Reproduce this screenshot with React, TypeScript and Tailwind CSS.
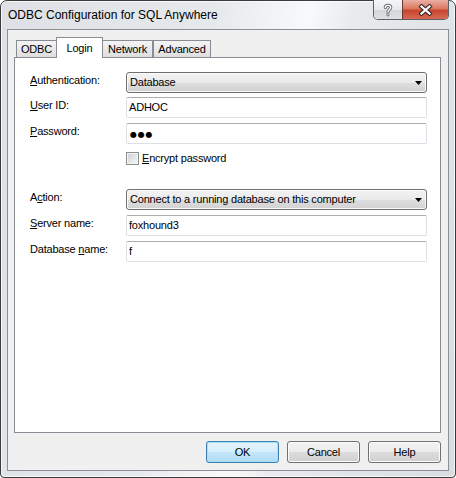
import type { ReactNode } from 'react';

function Label({ children }: { children: ReactNode }) {
  return <div className="pb-[4px] leading-[13px]">{children}</div>;
}

function Combo({ value }: { value: string }) {
  return (
    <div className="flex h-[21px] items-center rounded-[3px] border border-[#707070] bg-[linear-gradient(#f3f3f3_0%,#eaeaea_50%,#dedede_51%,#d2d2d2_100%)] pl-[3px] pr-[4px] shadow-[inset_0_0_0_1px_#fafafa]">
      <span className="flex-1 leading-[13px]">{value}</span>
      <svg width="7" height="4" viewBox="0 0 7 4">
        <path d="M0 0H7L3.5 4Z" fill="#000" />
      </svg>
    </div>
  );
}

function Edit({ children }: { children?: ReactNode }) {
  return (
    <div className="flex h-[21px] items-center rounded-[2px] border border-[#dde1e7] border-t-[#abadb3] bg-white pl-[2px]">
      <span className="leading-[13px]">{children}</span>
    </div>
  );
}

function Button({ label, isDefault }: { label: string; isDefault?: boolean }) {
  return (
    <div
      className={
        isDefault
          ? 'flex h-[22px] w-[73px] items-center justify-center rounded-[3px] border border-[#3c7fb1] bg-[linear-gradient(#e5f4fc_0%,#d5eefc_50%,#c2e6fa_51%,#b2dcf4_100%)] shadow-[inset_0_0_0_1px_#a8e1f7]'
          : 'flex h-[22px] w-[73px] items-center justify-center rounded-[3px] border border-[#707070] bg-[linear-gradient(#f2f2f2_0%,#ebebeb_50%,#dddddd_51%,#cfcfcf_100%)] shadow-[inset_0_0_0_1px_#fbfbfb]'
      }
    >
      {label}
    </div>
  );
}

export default function App() {
  return (
    <div className="h-[478px] w-[456px] bg-white">
      <div className="flex h-[478px] w-[456px] flex-col rounded-t-[7px] rounded-b-[4px] border border-[#3b3b3b] bg-[linear-gradient(100deg,#dde1e5_0%,#e6e9ec_40%,#f8f9fa_58%,#e8eaed_66%,#d9dde1_100%)] font-['Liberation_Sans',Arial,sans-serif] text-[11px] tracking-[-0.2px] text-black shadow-[inset_0_0_0_1px_rgba(255,255,255,0.7)]">
        {/* title bar */}
        <div className="flex h-[28px] items-start pl-[7px] pr-[6px]">
          <div className="pt-[7px] text-[12px] leading-[14px] tracking-normal">ODBC Configuration for SQL Anywhere</div>
          <div className="-mt-px ml-auto flex h-[20px] overflow-hidden rounded-b-[5px] border border-t-0 border-[#5c6068]">
            <div className="flex w-[28px] items-center justify-center bg-[linear-gradient(#f5f6f7_0%,#e6e8ea_50%,#d3d6d9_51%,#dfe1e4_100%)]">
              <svg width="10" height="14" viewBox="0 0 10 14">
                <path d="M2.3 4.4C2.3 1.6 7.7 1.6 7.7 4.4C7.7 6.6 5 6.6 5 9" fill="none" stroke="#6d7178" strokeWidth="3.2" strokeLinecap="round" />
                <circle cx="5" cy="11.8" r="1.6" fill="#6d7178" />
                <path d="M2.3 4.4C2.3 1.6 7.7 1.6 7.7 4.4C7.7 6.6 5 6.6 5 9" fill="none" stroke="#fff" strokeWidth="1.3" strokeLinecap="round" />
                <circle cx="5" cy="11.8" r="0.7" fill="#fff" />
              </svg>
            </div>
            <div className="flex w-[46px] items-center justify-center border-l border-[#6b3a32] bg-[linear-gradient(#eab0a3_0%,#dc7862_45%,#c94530_55%,#d66a50_100%)]">
              <svg width="15" height="12" viewBox="0 0 15 12">
                <path d="M3.5 2.5L11.5 9.5M11.5 2.5L3.5 9.5" stroke="#43302c" strokeWidth="4.4" strokeLinecap="square" />
                <path d="M3.5 2.5L11.5 9.5M11.5 2.5L3.5 9.5" stroke="#fff" strokeWidth="2.2" strokeLinecap="square" />
              </svg>
            </div>
          </div>
        </div>

        {/* client area */}
        <div className="mx-[6px] mb-[6px] flex flex-1 flex-col border border-[#8c9096] bg-[#f0f0f0] pt-[7px] pr-[7px] pb-[7px] pl-[6px]">
          {/* tabs */}
          <div className="flex h-[20px] items-end pl-[2px]">
            <div className="flex h-[17px] w-[40px] items-center justify-center border border-r-0 border-b-0 border-[#898c95] bg-[linear-gradient(#f4f4f4,#dedede)] pt-px">
              ODBC
            </div>
            <div className="relative z-10 -mb-px flex h-[21px] w-[47px] items-center justify-center border border-b-0 border-[#898c95] bg-white">
              Login
            </div>
            <div className="flex h-[17px] w-[50px] items-center justify-center border border-l-0 border-b-0 border-[#898c95] bg-[linear-gradient(#f4f4f4,#dedede)] pt-px">
              Network
            </div>
            <div className="flex h-[17px] w-[58px] items-center justify-center border border-b-0 border-[#898c95] bg-[linear-gradient(#f4f4f4,#dedede)] pt-px">
              Advanced
            </div>
          </div>

          {/* tab panel */}
          <div className="flex-1 border border-[#898c95] bg-white pt-[14px] pl-[15px]">
            <div className="grid grid-cols-[96px_301px] items-center">
              <Label>
                <u>A</u>uthentication:
              </Label>
              <Combo value="Database" />

              <div className="col-span-2 h-[4px]" />
              <Label>
                <u>U</u>ser ID:
              </Label>
              <Edit>ADHOC</Edit>

              <div className="col-span-2 h-[5px]" />
              <Label>
                <u>P</u>assword:
              </Label>
              <Edit>
                <span className="pl-[1px] font-['DejaVu_Sans',sans-serif] text-[8px] tracking-[0.8px]">●●●</span>
              </Edit>

              <div className="col-span-2 h-[8px]" />
              <div />
              <div className="flex h-[13px] items-center gap-[3px]">
                <div className="h-[13px] w-[13px] border border-[#8e8f8f] bg-[linear-gradient(135deg,#cdd0d4_0%,#e6e7e9_60%,#f7f7f7_100%)] shadow-[inset_0_0_0_1px_#f4f4f4]" />
                <span className="leading-[13px]">
                  <u>E</u>ncrypt password
                </span>
              </div>

              <div className="col-span-2 h-[24px]" />
              <Label>
                A<u>c</u>tion:
              </Label>
              <Combo value="Connect to a running database on this computer" />

              <div className="col-span-2 h-[5px]" />
              <Label>
                <u>S</u>erver name:
              </Label>
              <Edit>foxhound3</Edit>

              <div className="col-span-2 h-[5px]" />
              <Label>
                Database <u>n</u>ame:
              </Label>
              <Edit>f</Edit>
            </div>
          </div>

          {/* buttons */}
          <div className="mt-[8px] flex justify-end gap-[8px]">
            <Button label="OK" isDefault />
            <Button label="Cancel" />
            <Button label="Help" />
          </div>
        </div>
      </div>
    </div>
  );
}
